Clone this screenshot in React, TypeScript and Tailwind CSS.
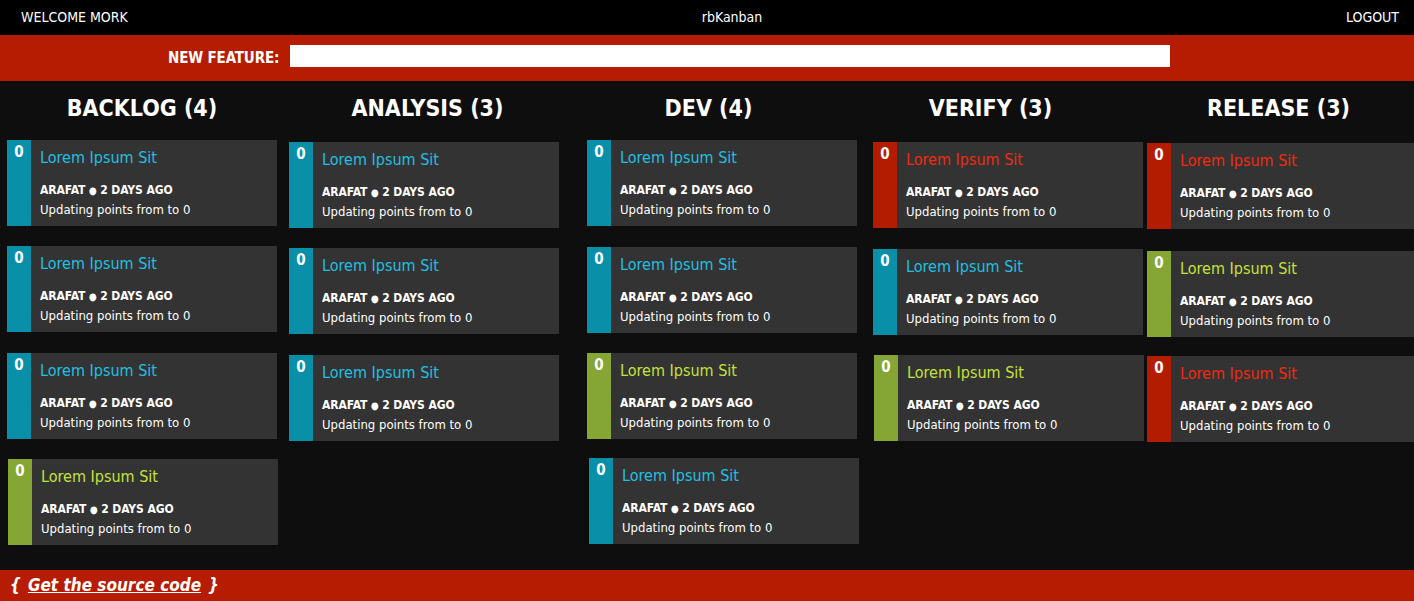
import type { FC } from 'react';

type Tone = 'teal' | 'green' | 'red';

type Card = { tone: Tone; ml: string; mt: string };

type Column = { title: string; pad: string; cards: Card[] };

const STRIPE: Record<Tone, string> = {
  teal: 'bg-[#0a8fa8]',
  green: 'bg-[#85a534]',
  red: 'bg-[#b41c02]',
};

const TITLE: Record<Tone, string> = {
  teal: 'text-[#20c0e2]',
  green: 'text-[#c4e23c]',
  red: 'text-[#f3290f]',
};

const COLUMNS: Column[] = [
  {
    title: 'BACKLOG (4)',
    pad: 'pl-[1px]',
    cards: [
      { tone: 'teal', ml: 'ml-[7px]', mt: 'mt-[5px]' },
      { tone: 'teal', ml: 'ml-[7px]', mt: 'mt-[20px]' },
      { tone: 'teal', ml: 'ml-[7px]', mt: 'mt-[21px]' },
      { tone: 'green', ml: 'ml-[8px]', mt: 'mt-[20px]' },
    ],
  },
  {
    title: 'ANALYSIS (3)',
    pad: 'pl-[6px]',
    cards: [
      { tone: 'teal', ml: 'ml-[6px]', mt: 'mt-[7px]' },
      { tone: 'teal', ml: 'ml-[6px]', mt: 'mt-[20px]' },
      { tone: 'teal', ml: 'ml-[6px]', mt: 'mt-[21px]' },
    ],
  },
  {
    title: 'DEV (4)',
    pad: 'pl-[2px]',
    cards: [
      { tone: 'teal', ml: 'ml-[21px]', mt: 'mt-[5px]' },
      { tone: 'teal', ml: 'ml-[21px]', mt: 'mt-[21px]' },
      { tone: 'green', ml: 'ml-[21px]', mt: 'mt-[20px]' },
      { tone: 'teal', ml: 'ml-[23px]', mt: 'mt-[19px]' },
    ],
  },
  {
    title: 'VERIFY (3)',
    pad: 'pl-[0px]',
    cards: [
      { tone: 'red', ml: 'ml-[24px]', mt: 'mt-[7px]' },
      { tone: 'teal', ml: 'ml-[24px]', mt: 'mt-[21px]' },
      { tone: 'green', ml: 'ml-[25px]', mt: 'mt-[20px]' },
    ],
  },
  {
    title: 'RELEASE (3)',
    pad: 'pl-[10px]',
    cards: [
      { tone: 'red', ml: 'ml-[15px]', mt: 'mt-[8px]' },
      { tone: 'green', ml: 'ml-[15px]', mt: 'mt-[22px]' },
      { tone: 'red', ml: 'ml-[15px]', mt: 'mt-[19px]' },
    ],
  },
];

const FONT = "font-['DejaVu_Sans_Condensed','DejaVu_Sans',sans-serif]";

const TaskCard: FC<{ card: Card }> = ({ card }) => (
  <div className={`flex w-[270px] h-[86px] shrink-0 bg-[#333333] ${card.ml} ${card.mt}`}>
    {/* --- PUAN --- */}
    <div className={`w-[24px] shrink-0 ${STRIPE[card.tone]} text-white font-bold text-[15px] leading-[18px] text-center pt-[3px]`}>
      0
    </div>
    <div className="flex flex-col pl-[9px] pt-[9px] text-white">
      <p className={`text-[16px] leading-[18px] ${TITLE[card.tone]}`}>Lorem Ipsum Sit</p>
      <p className="mt-[15px] text-[12px] leading-[16px] font-bold tracking-[-0.1px]">
        ARAFAT <span className="text-[10px]">●</span> 2 DAYS AGO
      </p>
      <p className="mt-[3px] text-[13px] leading-[16px]">Updating points from to 0</p>
    </div>
  </div>
);

const App: FC = () => {
  return (
    <div className={`h-[601px] w-full flex flex-col overflow-hidden bg-[#0e0e0e] ${FONT}`}>
      {/* --- UST MENU --- */}
      <header className="h-[35px] shrink-0 bg-black text-white text-[14px] flex items-center pl-[21px] pr-[15px]">
        <div className="flex-1">WELCOME MORK</div>
        <div className="ml-[44px]">rbKanban</div>
        <div className="flex-1 text-right">LOGOUT</div>
      </header>

      {/* --- YENI OZELLIK --- */}
      <div className="h-[46px] shrink-0 bg-[#b51c02] flex items-center pl-[168px] gap-[11px]">
        <label className="text-white font-bold text-[15px] tracking-[-0.15px]">NEW FEATURE:</label>
        <input type="text" className="w-[880px] h-[22px] bg-white outline-none mt-[-4px]" />
      </div>

      {/* --- PANO --- */}
      <main className="flex-1 flex overflow-hidden">
        {COLUMNS.map((col) => (
          <section key={col.title} className="w-[283px] shrink-0 flex flex-col">
            <h2 className={`h-[54px] flex items-center justify-center text-white font-bold text-[23px] ${col.pad}`}>
              {col.title}
            </h2>
            {col.cards.map((card, i) => (
              <TaskCard key={i} card={card} />
            ))}
          </section>
        ))}
      </main>

      {/* --- ALT BILGI --- */}
      <footer className="h-[31px] shrink-0 bg-[#b51c02] flex items-center pl-[10px] text-white font-bold italic text-[17px]">
        <span>{'{'}</span>
        <a href="#" className="underline mx-[7px]">Get the source code</a>
        <span>{'}'}</span>
      </footer>
    </div>
  );
};

export default App;
